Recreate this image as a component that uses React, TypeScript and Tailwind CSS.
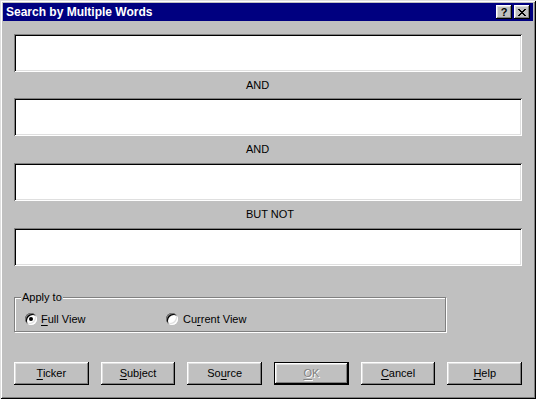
const raised = "shadow-[inset_-1px_-1px_#000,inset_1px_1px_#fff,inset_-2px_-2px_#808080,inset_2px_2px_#dfdfdf]";
const sunken = "shadow-[inset_1px_1px_#808080,inset_-1px_-1px_#fff,inset_2px_2px_#000,inset_-2px_-2px_#dfdfdf]";

function Field() {
    return <div className={`h-[38px] bg-white ${sunken}`} />;
}

function Label({ text, h }: { text: string; h: string }) {
    return (
        <div className={`${h} flex items-center pl-[232px] text-[11px] text-black`}>
            {text}
        </div>
    );
}

function Radio({ checked }: { checked?: boolean }) {
    return (
        <div className={`w-[12px] h-[12px] rounded-full bg-white flex items-center justify-center shadow-[inset_1px_1px_#808080,inset_-1px_-1px_#fff,inset_2px_2px_#000,inset_-2px_-2px_#dfdfdf]`}>
            {checked && <div className="w-[4px] h-[4px] rounded-full bg-black" />}
        </div>
    );
}

type BtnProps = { pre?: string; u: string; post: string; disabled?: boolean; isDefault?: boolean };

function Button({ pre = "", u, post, disabled, isDefault }: BtnProps) {
    const label = (
        <span className={disabled ? "text-[#808080] [text-shadow:1px_1px_#fff]" : "text-black"}>
            {pre}
            <span className="underline underline-offset-[2px]">{u}</span>
            {post}
        </span>
    );
    if (isDefault) {
        return (
            <div className="w-[75px] h-[23px] border border-black">
                <div className={`w-full h-full flex items-center justify-center text-[11px] ${raised}`}>{label}</div>
            </div>
        );
    }
    return (
        <div className={`w-[75px] h-[23px] flex items-center justify-center text-[11px] ${raised}`}>{label}</div>
    );
}

export default function App() {
    return (
        <div
            className={`w-[536px] h-[399px] bg-[#c0c0c0] p-[3px] flex flex-col shadow-[inset_1px_1px_#dfdfdf,inset_-1px_-1px_#000,inset_2px_2px_#fff,inset_-2px_-2px_#808080]`}
            style={{ fontFamily: '"Liberation Sans", Arial, sans-serif' }}
        >
            {/* title bar */}
            <div className="h-[18px] bg-[#000080] flex items-center pl-[3px] pr-[3px]">
                <span className="text-white font-bold text-[12px] flex-1">Search by Multiple Words</span>
                <div className={`w-[16px] h-[14px] bg-[#c0c0c0] flex items-center justify-center ${raised}`}>
                    <span className="text-black font-bold text-[11px] leading-none mt-[1px]">?</span>
                </div>
                <div className={`w-[16px] h-[14px] ml-[2px] bg-[#c0c0c0] flex items-center justify-center ${raised}`}>
                    <svg width="8" height="7" viewBox="0 0 8 7" shapeRendering="crispEdges">
                        <path d="M0 0h2v1H0zM6 0h2v1H6zM1 1h2v1H1zM5 1h2v1H5zM2 2h4v1H2zM3 3h2v1H3zM2 4h4v1H2zM1 5h2v1H1zM5 5h2v1H5zM0 6h2v1H0zM6 6h2v1H6z" fill="#000" />
                    </svg>
                </div>
            </div>

            <div className="flex-1 px-[11px] pt-[13px] flex flex-col">
                <Field />
                <Label text="AND" h="h-[26px]" />
                <Field />
                <Label text="AND" h="h-[27px]" />
                <Field />
                <Label text="BUT NOT" h="h-[27px]" />
                <Field />

                <div className="relative mt-[31px] w-[432px] h-[35px] border border-[#808080] shadow-[inset_1px_1px_#fff,1px_1px_#fff]">
                    <span className="absolute left-[6px] top-[-8px] px-[1px] bg-[#c0c0c0] text-[11px] leading-[14px] text-black">Apply to</span>
                    <div className="flex items-center pl-[10px] pt-[13px]">
                        <div className="w-[141px] flex items-center gap-[4px] text-[11px] text-black">
                            <Radio checked />
                            <span><span className="underline underline-offset-[2px]">F</span>ull View</span>
                        </div>
                        <div className="flex items-center gap-[5px] text-[11px] text-black">
                            <Radio />
                            <span>Cu<span className="underline underline-offset-[2px]">r</span>rent View</span>
                        </div>
                    </div>
                </div>

                <div className="mt-[30px] flex gap-[12px]">
                    <Button u="T" post="icker" />
                    <Button u="S" post="ubject" />
                    <Button pre="So" u="u" post="rce" />
                    <Button u="O" post="K" disabled isDefault />
                    <Button u="C" post="ancel" />
                    <Button u="H" post="elp" />
                </div>
            </div>
        </div>
    );
}
